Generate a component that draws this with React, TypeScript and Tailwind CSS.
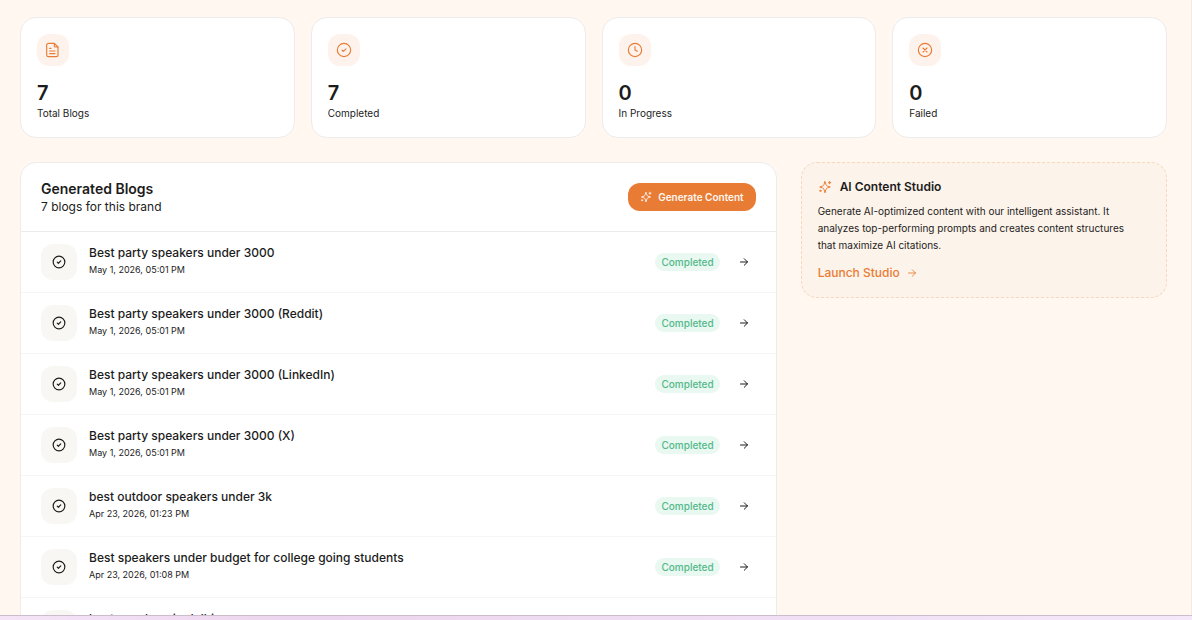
import type { ReactNode } from "react";

type IconProps = { className?: string };

function Icon({ className, children }: IconProps & { children: ReactNode }) {
  return (
    <svg
      viewBox="0 0 24 24"
      className={className}
      fill="none"
      stroke="currentColor"
      strokeWidth="1.7"
      strokeLinecap="round"
      strokeLinejoin="round"
      aria-hidden="true"
    >
      {children}
    </svg>
  );
}

function FileIcon({ className }: IconProps) {
  return (
    <Icon className={className}>
      <path d="M14 2H5a2.500 2.500 0 0 0-2.500 2.500v15A2.500 2.500 0 0 0 5 22h12a2.500 2.500 0 0 0 2.500-2.500V7.500z" />
      <path d="M14 2v4a1.500 1.500 0 0 0 1.500 1.500h4" />
      <path d="M7 9.500h2M7 13.500h8M7 17.500h8" />
    </Icon>
  );
}

function CheckIcon({ className }: IconProps) {
  return (
    <Icon className={className}>
      <circle cx="12" cy="12" r="10" />
      <path d="M9 12.300l2 1.900 4-4" />
    </Icon>
  );
}

function ClockIcon({ className }: IconProps) {
  return (
    <Icon className={className}>
      <circle cx="12" cy="12" r="10" />
      <path d="M12 7v5l3.500 2" />
    </Icon>
  );
}

function FailedIcon({ className }: IconProps) {
  return (
    <Icon className={className}>
      <circle cx="12" cy="12" r="10" />
      <path d="M9 9l6 6M15 9l-6 6" />
    </Icon>
  );
}

function SparklesIcon({ className }: IconProps) {
  return (
    <Icon className={className}>
      <path d="M12 3l1.800 5.200a3.500 3.500 0 0 0 2 2L21 12l-5.200 1.800a3.500 3.500 0 0 0-2 2L12 22l-1.800-6.200a3.500 3.500 0 0 0-2-2L3 12l5.200-1.800a3.500 3.500 0 0 0 2-2z" />
      <path d="M20 2.500v4M18 4.500h4" />
      <circle cx="4" cy="18.500" r="1.200" />
    </Icon>
  );
}

function ArrowIcon({ className }: IconProps) {
  return (
    <Icon className={className}>
      <path d="M5 12h14M12.500 5.500L19 12l-6.500 6.500" />
    </Icon>
  );
}

const stats = [
  { label: "Total Blogs", value: 7, icon: FileIcon },
  { label: "Completed", value: 7, icon: CheckIcon },
  { label: "In Progress", value: 0, icon: ClockIcon },
  { label: "Failed", value: 0, icon: FailedIcon },
];

const blogs = [
  { title: "Best party speakers under 3000", date: "May 1, 2026, 05:01 PM" },
  { title: "Best party speakers under 3000 (Reddit)", date: "May 1, 2026, 05:01 PM" },
  { title: "Best party speakers under 3000 (LinkedIn)", date: "May 1, 2026, 05:01 PM" },
  { title: "Best party speakers under 3000 (X)", date: "May 1, 2026, 05:01 PM" },
  { title: "best outdoor speakers under 3k", date: "Apr 23, 2026, 01:23 PM" },
  { title: "Best speakers under budget for college going students", date: "Apr 23, 2026, 01:08 PM" },
  { title: "best speakers in delhi", date: "Apr 23, 2026, 01:02 PM" },
];

function StatCard({ label, value, icon: StatIcon }: (typeof stats)[number]) {
  return (
    <div className="rounded-2xl border border-[#ececec] bg-white p-4">
      <div className="flex size-8 items-center justify-center rounded-xl bg-[#fdf3ec] text-[#e97c35]">
        <StatIcon className="size-4" />
      </div>
      <p className="mt-[15px] text-xl leading-6 font-semibold">{value}</p>
      <p className="text-[10px] leading-4">{label}</p>
    </div>
  );
}

function BlogRow({ title, date }: (typeof blogs)[number]) {
  return (
    <li className="border-b border-[#f5f5f5]">
      <a href="#" className="flex h-[60px] items-center gap-3 pr-[26px] pl-5">
        <span className="flex size-9 shrink-0 items-center justify-center rounded-xl bg-[#f8f7f4]">
          <CheckIcon className="size-[14px] stroke-2" />
        </span>
        <span className="min-w-0 flex-1 pb-[2px]">
          <span className="block truncate text-xs leading-[18px] font-medium">
            {title}
          </span>
          <span className="block text-[9px] leading-4">{date}</span>
        </span>
        <span className="mr-[6px] rounded-full bg-[#e9f8f1] px-[6px] text-[10px] leading-[18px] font-medium text-[#53b88b]">
          Completed
        </span>
        <ArrowIcon className="size-3 stroke-2" />
      </a>
    </li>
  );
}

export default function App() {
  return (
    <div className="flex h-screen flex-col bg-[#fff7f0] font-[Inter,sans-serif] text-[#1c1c1c]">
      <main className="min-h-0 flex-1 overflow-hidden border-r border-[#f1ebe5] pt-[17px] pr-6 pl-5">
        <div className="grid grid-cols-4 gap-4">
          {stats.map((stat) => (
            <StatCard key={stat.label} {...stat} />
          ))}
        </div>

        <div className="mt-6 grid grid-cols-[758fr_367fr] items-start gap-6">
          <section className="rounded-2xl border border-[#ececec] bg-white">
            <header className="flex items-center justify-between border-b border-[#ececec] px-5 py-4">
              <div>
                <h2 className="text-sm leading-5 font-semibold">
                  Generated Blogs
                </h2>
                <p className="text-xs leading-4">7 blogs for this brand</p>
              </div>
              <button
                type="button"
                className="flex h-7 items-center gap-[6px] rounded-xl bg-[#e97c35] px-3 text-[10px] font-semibold text-[#fff7f0]"
              >
                <SparklesIcon className="size-3" />
                Generate Content
              </button>
            </header>
            <ul>
              {blogs.map((blog) => (
                <BlogRow key={blog.title} {...blog} />
              ))}
            </ul>
          </section>

          <aside className="rounded-2xl border border-dashed border-[#f7d8bf] bg-[#fcf3ea] p-4">
            <div className="flex items-center gap-2">
              <SparklesIcon className="size-[14px] text-[#e97c35]" />
              <h2 className="text-xs leading-4 font-semibold">
                AI Content Studio
              </h2>
            </div>
            <p className="mt-2 max-w-[320px] text-[10px] leading-[17px]">
              Generate AI-optimized content with our intelligent assistant. It
              analyzes top-performing prompts and creates content structures
              that maximize AI citations.
            </p>
            <a
              href="#"
              className="mt-[11px] flex items-center gap-[6px] text-xs leading-4 font-medium text-[#e97c35]"
            >
              Launch Studio
              <ArrowIcon className="size-3" />
            </a>
          </aside>
        </div>
      </main>
      <div className="h-[5px] shrink-0 border-t border-[#cbbdcb] bg-linear-to-r from-[#f5e4f8] via-[#ecd5ee] via-25% to-[#f5e8fa]" />
    </div>
  );
}
